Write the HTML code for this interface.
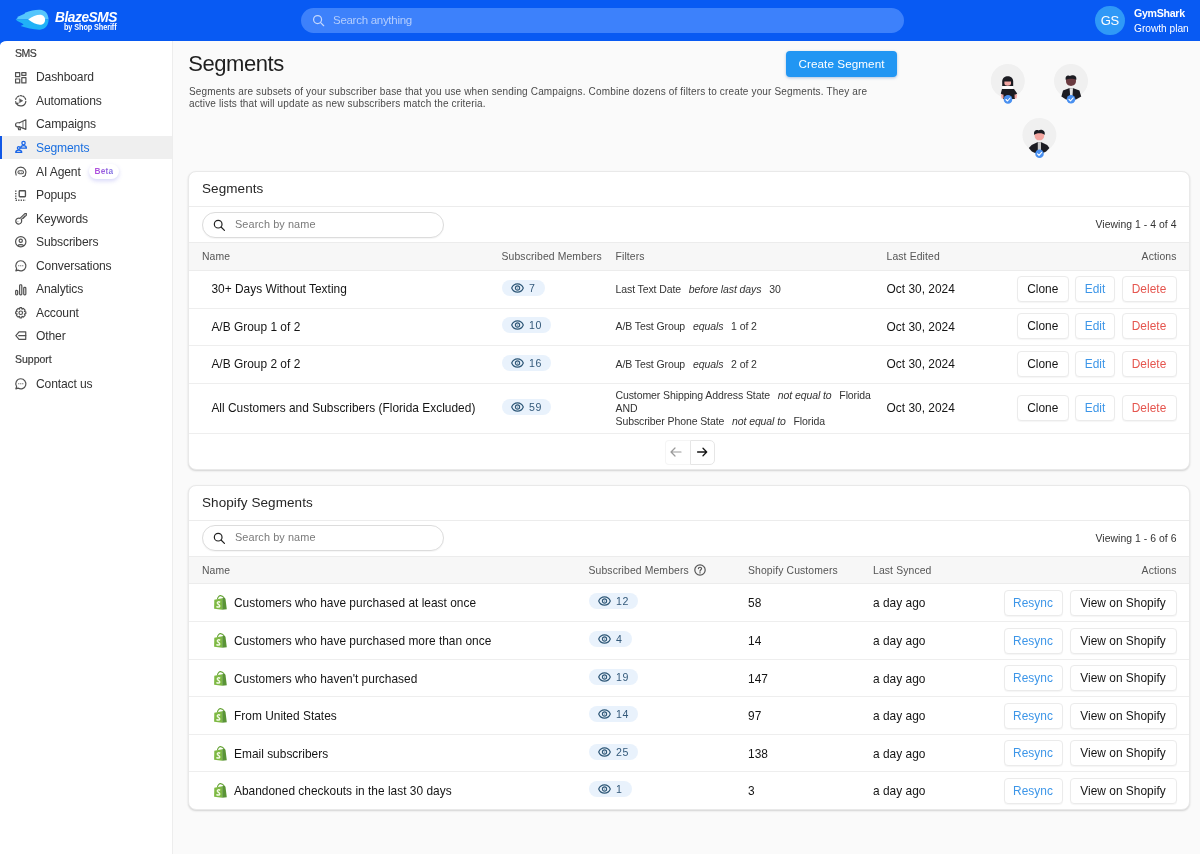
<!DOCTYPE html>
<html lang="en">
<head>
<meta charset="utf-8">
<title>Segments - BlazeSMS</title>
<style>
*{box-sizing:border-box;margin:0;padding:0}
html,body{width:1200px;height:854px;overflow:hidden}
body{font-family:"Liberation Sans",sans-serif;background:#085af3;color:#222;position:relative;font-size:13px}
.abs{position:absolute}
/* header */
#hdr{will-change:transform;position:absolute;left:0;top:0;width:1200px;height:41px;background:#085af3}
#logo-ic{position:absolute;left:0;top:0}
#logo-t1{position:absolute;left:55px;top:8px;font-size:15.5px;font-weight:bold;font-style:italic;color:#fff;letter-spacing:-0.5px;line-height:18px;transform:scaleX(0.885);transform-origin:0 0}
#logo-t2{position:absolute;left:64px;top:23.2px;font-size:8.2px;font-weight:bold;color:#fff;line-height:10px;letter-spacing:-0.1px;transform:scaleX(0.89);transform-origin:0 0;white-space:nowrap}
#gsearch{position:absolute;left:300.5px;top:7.7px;width:603.5px;height:25.5px;border-radius:13px;background:#3d81fb;color:#b3cdfd;font-size:11.5px;letter-spacing:-0.28px;line-height:25.5px;padding-left:32.5px}
#gsearch svg{position:absolute;left:11px;top:6.5px;width:13px;height:13px}
#avatar{position:absolute;left:1095px;top:5.5px;width:29.5px;height:29.5px;border-radius:50%;background:#2f99f7;color:#fff;font-size:13px;line-height:29.5px;text-align:center;letter-spacing:-0.3px}
#uname{position:absolute;left:1134px;top:6.2px;font-size:11px;font-weight:bold;color:#fff;line-height:14px;letter-spacing:-0.3px;transform:scaleX(0.965);transform-origin:0 0}
#uplan{position:absolute;left:1134px;top:21.8px;font-size:10.2px;color:#fff;line-height:13px;letter-spacing:-0.02px}
/* sidebar */
#side{will-change:transform;position:absolute;left:0;top:41px;width:173px;height:813px;background:#fff;border-top-left-radius:7px 4.5px;border-right:1px solid #ededed;box-shadow:1px 0 2px rgba(0,0,0,.035)}
.slabel{position:absolute;left:15px;font-size:10.5px;color:#3c3c3c;line-height:12px;letter-spacing:-0.3px;-webkit-text-stroke:0.2px #3c3c3c}
.sitem{position:absolute;left:0;width:172px;height:23px;font-size:12.1px;color:#333;line-height:24px;padding-left:36px;letter-spacing:-0.14px}
.sitem svg{position:absolute;left:15.2px;top:6.3px;width:11.5px;height:11.5px;stroke:#505050;fill:none;stroke-width:1.25;stroke-linecap:round;stroke-linejoin:round;overflow:visible}
.sitem.active{background:#efefef;color:#1a6fe0;border-left:2px solid #1158e6;padding-left:34px}
.sitem.active svg{left:12.9px;top:5.2px;stroke:#1a66e8;stroke-width:1.35}
#beta{position:absolute;left:89px;top:4.5px;height:15px;width:30px;border-radius:8px;background:#fff;box-shadow:0 2px 4px rgba(110,110,235,.28);font-size:8.3px;font-weight:bold;line-height:15px;text-align:center;letter-spacing:0.25px}
#beta b{background:linear-gradient(90deg,#b44ddd,#7b6fe2);-webkit-background-clip:text;background-clip:text;color:transparent;font-weight:bold}
/* main */
#main{will-change:transform;position:absolute;left:173px;top:41px;width:1027px;height:813px;background:#fafafa}

/* page head */
#ptitle{position:absolute;left:15.3px;top:9.4px;font-size:22px;color:#1f1f1f;line-height:28px;letter-spacing:-0.45px}
#pdesc{position:absolute;left:16px;top:45.1px;width:720px;font-size:10px;color:#4a4a4a;line-height:12px;letter-spacing:0.155px;white-space:nowrap}
#create{position:absolute;left:613px;top:10px;width:111px;height:26px;border-radius:4px;background:#2196f3;color:#fff;font-size:11.7px;letter-spacing:0.07px;line-height:26px;text-align:center;box-shadow:0 1px 3px rgba(20,90,180,.35)}
/* cards */
.card{position:absolute;left:15px;width:1002px;background:#fff;border:1px solid #e9e9e9;border-radius:8px;box-shadow:0 1px 2px rgba(0,0,0,.16)}
.ctitle{position:absolute;left:13px;top:8px;font-size:13.5px;color:#262626;line-height:18px;letter-spacing:0.08px}
.hline{position:absolute;left:0;width:1000px;height:1px;background:#ececec}
.sbox{position:absolute;left:13px;width:242px;height:26px;border:1px solid #dcdcdc;border-radius:13px;background:#fff;font-size:10.9px;letter-spacing:0.09px;color:#7a7a7a;line-height:23px;padding-left:32px;box-shadow:0 1px 1px rgba(0,0,0,.04)}
.sbox svg{position:absolute;left:9.5px;top:6px;width:12.5px;height:12.5px}
.viewing{position:absolute;right:12.5px;font-size:10.4px;color:#333;line-height:13px;letter-spacing:0.05px}
.thead{position:absolute;left:0;width:1000px;height:28px;background:#f7f7f7;border-top:1px solid #ececec;border-bottom:1px solid #ececec;font-size:10.4px;color:#555;letter-spacing:0.12px}
.thead span{position:absolute;top:0;line-height:27px;white-space:nowrap}
.row{position:absolute;left:0;width:1000px;border-bottom:1px solid #eeeeee;font-size:11.9px;color:#151515;letter-spacing:0.02px}
.row > span,.row > div{position:absolute;white-space:nowrap}
.badge{height:16px;border-radius:8px;background:#e9f2fc;color:#33597a;font-size:10.6px;line-height:16px;padding-left:27.5px;padding-right:9.5px;letter-spacing:0.55px}
.badge svg{position:absolute;left:9.3px;top:3px}
.btn{height:26px;border:1px solid #ebebeb;border-radius:4px;background:#fff;font-size:11.9px;letter-spacing:0.03px;line-height:24.5px;text-align:center;color:#151515;box-shadow:0 1px 1px rgba(0,0,0,.04)}
.btn.blue{color:#3d96e8}
.btn.red{color:#e5564f}
.flt{font-size:10.5px;color:#333;line-height:13px;letter-spacing:-0.1px}
.flt i{color:#333;margin:0 5px 0 5px}
</style>
</head>
<body>
<div id="hdr">
  <svg id="logo-ic" width="60" height="41" viewBox="0 0 60 41">
    <path d="M15.7 19.6 L17.8 17.7 L17.2 17 L24.6 13.7 L25 12.7 C30 10.6 36 9.6 40 9.8 C45.5 10 48.6 14.5 48.6 19.6 Z" fill="#56c6fc"/>
    <path d="M15.7 19.6 L48.6 19.6 C48.6 25 45.5 29.5 40 29.7 C34 29.9 26 28 20.6 26.1 L23.6 24.5 L22.4 23.6 L17.4 21 Z" fill="#20b2f7"/>
    <path d="M28.2 19.6 C32 16.6 36.5 14.7 40 14.7 C43 14.7 45.1 17 45.1 19.7 C45.1 22.6 43 24.8 40 24.8 C36.5 24.8 32 22.6 28.2 19.6 Z" fill="#fff"/>
  </svg>
  <div id="logo-t1">BlazeSMS</div>
  <div id="logo-t2">by Shop Sheriff</div>
  <div id="gsearch">
    <svg width="14" height="14" viewBox="0 0 14 14" fill="none" stroke="#c5d8fd" stroke-width="1.3" stroke-linecap="round"><circle cx="6" cy="6" r="4.3"/><path d="M9.3 9.3 L12.6 12.6"/></svg>
    Search anything
  </div>
  <div id="avatar">GS</div>
  <div id="uname">GymShark</div>
  <div id="uplan">Growth plan</div>
</div>

<div id="side">
  <div class="slabel" style="top:6px;letter-spacing:-0.5px">SMS</div>
  <div class="sitem" style="top:24.3px"><svg viewBox="0 0 12 12"><rect x="0.6" y="0.6" width="4.3" height="4.3"/><rect x="7.1" y="0.6" width="4.3" height="2.9"/><rect x="0.6" y="7.3" width="4.3" height="4.1"/><rect x="7.1" y="5.9" width="4.3" height="5.5"/></svg>Dashboard</div>
  <div class="sitem" style="top:47.85px"><svg viewBox="0 0 12 12"><path d="M0.9 4.6 A5.3 5.3 0 0 1 11.1 4.6" stroke-dasharray="1.7 1.3"/><path d="M11.3 6.6 A5.3 5.3 0 0 1 1.4 8.7"/><path d="M0.7 6.9 L1.2 9.1 L3.3 8.5"/><path d="M4.9 4.1 L8.1 6 L4.9 7.9 Z" fill="#555" stroke-width="0.6"/></svg>Automations</div>
  <div class="sitem" style="top:71.4px"><svg viewBox="0 0 12 12"><path d="M4.6 3.9 L11.3 0.8 V10.8 L4.6 8.1"/><path d="M4.6 3.9 H2.7 A2.1 2.1 0 0 0 2.7 8.1 H4.6"/><path d="M3.1 8.2 L3.9 11.2 H5.7 L5.1 8.4"/><path d="M8.3 2.4 V9.4" stroke-width="0.8"/></svg>Campaigns</div>
  <div class="sitem active" style="top:95px"><svg viewBox="0 0 12 12"><circle cx="8.9" cy="2.2" r="1.75"/><path d="M5.9 7.5 C5.9 5.4 7.2 4.9 8.9 4.9 C10.6 4.9 11.9 5.4 11.9 7.5 Z"/><circle cx="3.9" cy="7.3" r="1.4"/><path d="M0.8 11.9 C0.8 10 2 9.6 3.9 9.6 C5.8 9.6 7 10 7 11.9 Z"/></svg>Segments</div>
  <div class="sitem" style="top:118.5px"><svg viewBox="0 0 12 12"><path d="M1.2 9.4 A5.5 5.5 0 1 1 10.8 9.4"/><rect x="3.1" y="4.9" width="5.8" height="3.1" rx="1.55" stroke-width="1.05"/><circle cx="4.9" cy="6.45" r="0.5" fill="#505050" stroke="none"/><circle cx="7.1" cy="6.45" r="0.5" fill="#505050" stroke="none"/><path d="M10.8 9.4 C10.4 10.5 9.4 11 8 11" stroke-width="1.05"/></svg>AI Agent<span id="beta"><b>Beta</b></span></div>
  <div class="sitem" style="top:142.05px"><svg viewBox="0 0 12 12"><g transform="translate(-0.5,1)"><rect x="4.9" y="0.8" width="6.5" height="6.3" rx="0.7" stroke-width="1.4"/><path d="M1.3 0.6 v10.4 M1.3 10.8 h10.4" stroke-dasharray="1.3 1.25" stroke-linecap="butt" stroke-width="1.5"/></g></svg>Popups</div>
  <div class="sitem" style="top:165.6px"><svg viewBox="0 0 12 12"><path d="M5.2 5.6 L10.3 0.7 L11.9 0.6 L11.8 2.4 L10.9 3.3 L10 3.2 L10 4.3 L9 4.3 L8.9 5.4 L7.9 5.4 L6.6 6.9 A3.1 3.1 0 1 1 5.2 5.6 Z"/><circle cx="3.1" cy="8.9" r="0.5" fill="#505050" stroke="none"/></svg>Keywords</div>
  <div class="sitem" style="top:189.15px"><svg viewBox="0 0 12 12"><circle cx="6" cy="6" r="5.4"/><circle cx="6" cy="4.9" r="1.7"/><path d="M2.9 10.1 C3.8 8.5 8.2 8.5 9.1 10.1"/></svg>Subscribers</div>
  <div class="sitem" style="top:212.7px"><svg viewBox="0 0 12 12"><path d="M6 0.8 A5.3 5.3 0 1 1 3.1 10.5 L0.9 11.3 L1.7 9.1 A5.3 5.3 0 0 1 6 0.8 Z"/><path d="M3.7 6 h0.4 M5.8 6 h0.4 M7.9 6 h0.4" stroke-width="0.9"/></svg>Conversations</div>
  <div class="sitem" style="top:236.25px"><svg viewBox="0 0 12 12"><rect x="0.7" y="6.6" width="2.1" height="4.8" rx="0.9"/><rect x="4.8" y="0.8" width="2.3" height="10.6" rx="0.9"/><rect x="9.1" y="3.5" width="2.2" height="7.9" rx="0.9"/></svg>Analytics</div>
  <div class="sitem" style="top:259.8px"><svg viewBox="0 0 12 12"><circle cx="6" cy="6" r="1.85"/><path d="M5.1 0.7 H6.9 L7.3 2.2 L8.7 1.5 L10.5 3.3 L9.8 4.7 L11.3 5.1 V6.9 L9.8 7.3 L10.5 8.7 L8.7 10.5 L7.3 9.8 L6.9 11.3 H5.1 L4.7 9.8 L3.3 10.5 L1.5 8.7 L2.2 7.3 L0.7 6.9 V5.1 L2.2 4.7 L1.5 3.3 L3.3 1.5 L4.7 2.2 Z"/></svg>Account</div>
  <div class="sitem" style="top:283.35px"><svg viewBox="0 0 12 12"><g transform="translate(0,-1.2)"><path d="M4.2 2.1 H11.2 V9.9 H4.2 L0.9 6 Z"/><path d="M3.8 6 H11.2"/></g></svg>Other</div>
  <div class="slabel" style="top:312px;letter-spacing:0">Support</div>
  <div class="sitem" style="top:330.5px"><svg viewBox="0 0 12 12"><path d="M6 0.8 A5.3 5.3 0 1 1 3.1 10.5 L0.9 11.3 L1.7 9.1 A5.3 5.3 0 0 1 6 0.8 Z"/><path d="M3.7 6 h0.4 M5.8 6 h0.4 M7.9 6 h0.4" stroke-width="0.9"/></svg>Contact us</div>
</div>

<div id="main">

<div id="ptitle">Segments</div>
<div id="pdesc">Segments are subsets of your subscriber base that you use when sending Campaigns. Combine dozens of filters to create your Segments. They are<br>active lists that will update as new subscribers match the criteria.</div>
<div id="create">Create Segment</div>
<svg class="abs" style="left:787px;top:9px" width="160" height="120" viewBox="0 0 160 120">
  <defs><filter id="bl" x="-20%" y="-20%" width="140%" height="140%"><feGaussianBlur stdDeviation="0.35"/></filter></defs>
  <g filter="url(#bl)">
  <circle cx="47.8" cy="31" r="17" fill="#f0f0f0"/>
  <circle cx="111" cy="31" r="17" fill="#f0f0f0"/>
  <circle cx="79.4" cy="85" r="17" fill="#f0f0f0"/>
  <!-- woman -->
  <path d="M42.2 36 V31.5 C42.2 24.5 53.2 24.5 53.2 31.5 V36 Z" fill="#1d1d24"/>
  <path d="M44.4 31.6 H51 V33.5 C51 36.4 44.4 36.4 44.4 33.5 Z" fill="#f2a7a3"/>
  <rect x="42.6" y="36.2" width="10.4" height="2.4" fill="#fff"/>
  <path d="M40.8 43.5 L42 39 H54 L57.2 43.5 L55 45.5 V49 H43 V45.5 Z" fill="#1d1d24"/>
  <path d="M41 44.6 L43.4 44.6 L43.6 48.4 L41.6 48.4 Z M54.6 44.6 L57 44.6 L56.6 48.4 L54.6 48.4 Z" fill="#f2a7a3"/>
  <circle cx="48" cy="49.4" r="4.3" fill="#4a90f0"/>
  <path d="M46 49.5 L47.5 51 L50.2 48" fill="none" stroke="#fff" stroke-width="1.1" stroke-linecap="round" stroke-linejoin="round"/>
  <!-- man dark -->
  <path d="M106 31 C105.5 24.5 116.5 24.5 116 31 C116 37.5 106 37.5 106 31 Z" fill="#6b3b3f"/>
  <path d="M105.8 30 C104.6 25 109 25.2 110 26 C111.5 24.6 117.6 25 116.2 30 C114.4 28.4 107.6 28.4 105.8 30 Z" fill="#1d1d24"/>
  <path d="M101.4 46.4 L103 40.4 L109 38.2 H113.4 L119.4 40.4 L121.2 46.4 L116 49.4 H106 Z" fill="#1d1d24"/>
  <path d="M109.6 38.2 H113 L112.4 47 H110.2 Z" fill="#e6e6e6"/>
  <circle cx="111" cy="49.2" r="4.3" fill="#4a90f0"/>
  <path d="M109 49.3 L110.5 50.8 L113.2 47.8" fill="none" stroke="#fff" stroke-width="1.1" stroke-linecap="round" stroke-linejoin="round"/>
  <!-- man light -->
  <path d="M74.6 85.4 C74.2 79 84.6 79 84.2 85.4 C84.2 92 74.6 92 74.6 85.4 Z" fill="#f4a6a0"/>
  <path d="M74.2 85 C73 79.6 77.6 79.6 78.6 80.4 C80 79 86 79.4 84.6 85 C83.4 82.6 75.6 82.8 74.2 85 Z" fill="#1d1d24"/>
  <path d="M68.8 98 L71.6 95 L77.4 92.2 H81.4 L87.2 95 L89.4 98 L86.2 101.4 L83 103 H75 L71.8 101.4 Z" fill="#1d1d24"/>
  <path d="M77.8 92.2 H81 L81 102 H77.8 Z" fill="#c9c9c9"/>
  <circle cx="79.5" cy="103.7" r="4.3" fill="#4a90f0"/>
  <path d="M77.5 103.8 L79 105.3 L81.7 102.3" fill="none" stroke="#fff" stroke-width="1.1" stroke-linecap="round" stroke-linejoin="round"/>
  </g>
</svg>
<div class="card" style="top:130px;height:299px">
  <div class="ctitle" style="top:7.5px">Segments</div>
  <div class="hline" style="top:34px"></div>
  <div class="sbox" style="top:40px"><svg width="13" height="13" viewBox="0 0 14 14" fill="none" stroke="#222" stroke-width="1.35" stroke-linecap="round"><circle cx="5.8" cy="5.8" r="4.3"/><path d="M9 9 L12.8 12.8"/></svg>Search by name</div>
  <div class="viewing" style="top:46px">Viewing 1 - 4 of 4</div>
  <div class="thead" style="top:70px;height:29px"><span style="left:13px">Name</span><span style="left:312.5px">Subscribed Members</span><span style="left:426.5px">Filters</span><span style="left:697.5px">Last Edited</span><span style="right:12.5px">Actions</span></div>
  <div class="row" style="top:99px;height:38px">
  <span style="left:22.400000000000006px;top:10.3px;line-height:16px">30+ Days Without Texting</span>
  <div class="badge" style="left:312.5px;top:8.9px"><svg width="13" height="10" viewBox="0 0 13 10" fill="none" stroke="#2f5878" stroke-width="1.2" stroke-linejoin="round"><path d="M0.7 5 C2.9 -0.5 10.1 -0.5 12.3 5 C10.1 10.5 2.9 10.5 0.7 5 Z"/><circle cx="6.5" cy="5" r="2.1"/><circle cx="6.5" cy="5" r="0.5" fill="#2f5878" stroke="none"/></svg>7</div>
  <div class="flt" style="left:426.5px;top:11.7px">Last Text Date <i>before last days</i> 30</div>
  <span style="left:697.5px;top:10.3px;line-height:16px">Oct 30, 2024</span>
  <div class="btn" style="left:828px;top:4.699999999999999px;width:51.5px">Clone</div>
  <div class="btn blue" style="left:886.3px;top:4.699999999999999px;width:39.5px">Edit</div>
  <div class="btn red" style="left:932.5px;top:4.699999999999999px;width:55px">Delete</div>
</div>
<div class="row" style="top:137px;height:37px">
  <span style="left:22.400000000000006px;top:9.8px;line-height:16px">A/B Group 1 of 2</span>
  <div class="badge" style="left:312.5px;top:8.4px"><svg width="13" height="10" viewBox="0 0 13 10" fill="none" stroke="#2f5878" stroke-width="1.2" stroke-linejoin="round"><path d="M0.7 5 C2.9 -0.5 10.1 -0.5 12.3 5 C10.1 10.5 2.9 10.5 0.7 5 Z"/><circle cx="6.5" cy="5" r="2.1"/><circle cx="6.5" cy="5" r="0.5" fill="#2f5878" stroke="none"/></svg>10</div>
  <div class="flt" style="left:426.5px;top:11.2px">A/B Test Group <i>equals</i> 1 of 2</div>
  <span style="left:697.5px;top:9.8px;line-height:16px">Oct 30, 2024</span>
  <div class="btn" style="left:828px;top:4.199999999999999px;width:51.5px">Clone</div>
  <div class="btn blue" style="left:886.3px;top:4.199999999999999px;width:39.5px">Edit</div>
  <div class="btn red" style="left:932.5px;top:4.199999999999999px;width:55px">Delete</div>
</div>
<div class="row" style="top:174px;height:38px">
  <span style="left:22.400000000000006px;top:10.3px;line-height:16px">A/B Group 2 of 2</span>
  <div class="badge" style="left:312.5px;top:8.9px"><svg width="13" height="10" viewBox="0 0 13 10" fill="none" stroke="#2f5878" stroke-width="1.2" stroke-linejoin="round"><path d="M0.7 5 C2.9 -0.5 10.1 -0.5 12.3 5 C10.1 10.5 2.9 10.5 0.7 5 Z"/><circle cx="6.5" cy="5" r="2.1"/><circle cx="6.5" cy="5" r="0.5" fill="#2f5878" stroke="none"/></svg>16</div>
  <div class="flt" style="left:426.5px;top:11.7px">A/B Test Group <i>equals</i> 2 of 2</div>
  <span style="left:697.5px;top:10.3px;line-height:16px">Oct 30, 2024</span>
  <div class="btn" style="left:828px;top:4.699999999999999px;width:51.5px">Clone</div>
  <div class="btn blue" style="left:886.3px;top:4.699999999999999px;width:39.5px">Edit</div>
  <div class="btn red" style="left:932.5px;top:4.699999999999999px;width:55px">Delete</div>
</div>
<div class="row" style="top:212px;height:50px">
  <span style="left:22.400000000000006px;top:16.3px;line-height:16px">All Customers and Subscribers (Florida Excluded)</span>
  <div class="badge" style="left:312.5px;top:14.9px"><svg width="13" height="10" viewBox="0 0 13 10" fill="none" stroke="#2f5878" stroke-width="1.2" stroke-linejoin="round"><path d="M0.7 5 C2.9 -0.5 10.1 -0.5 12.3 5 C10.1 10.5 2.9 10.5 0.7 5 Z"/><circle cx="6.5" cy="5" r="2.1"/><circle cx="6.5" cy="5" r="0.5" fill="#2f5878" stroke="none"/></svg>59</div>
  <div class="flt" style="left:426.5px;top:5.199999999999999px">Customer Shipping Address State <i>not equal to</i> Florida<br>AND<br>Subscriber Phone State <i>not equal to</i> Florida</div>
  <span style="left:697.5px;top:16.3px;line-height:16px">Oct 30, 2024</span>
  <div class="btn" style="left:828px;top:10.7px;width:51.5px">Clone</div>
  <div class="btn blue" style="left:886.3px;top:10.7px;width:39.5px">Edit</div>
  <div class="btn red" style="left:932.5px;top:10.7px;width:55px">Delete</div>
</div>
  <div class="abs" style="left:475.5px;top:267.5px;width:25.5px;height:25px;border:1px solid #f5f5f5;border-right:none;border-radius:4px 0 0 4px;background:#fff"></div>
  <div class="abs" style="left:500.5px;top:267.5px;width:25px;height:25px;border:1px solid #e6e6e6;border-radius:0 5px 5px 0;background:#fff"></div>
  <svg class="abs" style="left:481.20000000000005px;top:274.5px" width="12" height="10" viewBox="0 0 12 10" fill="none" stroke="#9a9a9a" stroke-width="1.2" stroke-linecap="round" stroke-linejoin="round"><path d="M11 5 H1.2 M5 1 L1 5 L5 9"/></svg>
  <svg class="abs" style="left:507.4px;top:274.5px" width="12" height="10" viewBox="0 0 12 10" fill="none" stroke="#151515" stroke-width="1.3" stroke-linecap="round" stroke-linejoin="round"><path d="M1.6 5 H10.6 M7 1.3 L10.7 5 L7 8.7"/></svg>
</div>
<div class="card" style="top:444px;height:325px;overflow:hidden">
  <div class="ctitle" style="top:7.5px">Shopify Segments</div>
  <div class="hline" style="top:34px"></div>
  <div class="sbox" style="top:39px"><svg width="13" height="13" viewBox="0 0 14 14" fill="none" stroke="#222" stroke-width="1.35" stroke-linecap="round"><circle cx="5.8" cy="5.8" r="4.3"/><path d="M9 9 L12.8 12.8"/></svg>Search by name</div>
  <div class="viewing" style="top:45.5px">Viewing 1 - 6 of 6</div>
  <div class="thead" style="top:70px"><span style="left:13px">Name</span><span style="left:399.5px">Subscribed Members</span>
    <svg class="abs" style="left:504.9px;top:7.4px" width="12" height="12" viewBox="0 0 12 12" fill="none" stroke="#555" stroke-width="1.2"><circle cx="6" cy="6" r="5.2"/><path d="M4.4 4.6 C4.4 2.8 7.6 2.8 7.6 4.6 C7.6 5.8 6 5.8 6 7.2 M6 8.6 v0.4" stroke-linecap="round"/></svg>
    <span style="left:559px">Shopify Customers</span><span style="left:684px">Last Synced</span><span style="right:12.5px">Actions</span></div>
  <div class="row" style="top:98px;height:38px">
  <div style="left:25px;top:11.1px"><svg class="shop" width="13" height="15" viewBox="0 0 13 15"><path d="M3.4 4.6 C3.5 1.8 5.4 0.5 6.6 0.6 C8.4 0.8 9.7 2 10.1 3.2" stroke="#6aa63c" fill="none" stroke-width="1.1"/><path d="M0.3 4.8 L8.2 3.2 L8.2 14.7 L0.1 13.8 Z" fill="#7eb944"/><path d="M8.2 3.2 L10.8 2.8 L11.5 4 L12.8 14.2 L8.2 14.7 Z" fill="#5a9436"/><path d="M6.1 7.3 C4.7 6.2 3 7 3.4 8.3 C3.8 9.5 5.9 9.5 5.7 11.1 C5.5 12.5 3.5 12.3 2.5 11.4" fill="none" stroke="#f3fbe6" stroke-width="1.5"/></svg></div>
  <span style="left:45px;top:11.3px;line-height:16px">Customers who have purchased at least once</span>
  <div class="badge" style="left:399.5px;top:9.2px"><svg width="13" height="10" viewBox="0 0 13 10" fill="none" stroke="#2f5878" stroke-width="1.2" stroke-linejoin="round"><path d="M0.7 5 C2.9 -0.5 10.1 -0.5 12.3 5 C10.1 10.5 2.9 10.5 0.7 5 Z"/><circle cx="6.5" cy="5" r="2.1"/><circle cx="6.5" cy="5" r="0.5" fill="#2f5878" stroke="none"/></svg>12</div>
  <span style="left:559px;top:11.3px;line-height:16px">58</span>
  <span style="left:684px;top:11.3px;line-height:16px">a day ago</span>
  <div class="btn blue" style="left:814.5px;top:5.5px;width:59px">Resync</div>
  <div class="btn" style="left:880.5px;top:5.5px;width:107px">View on Shopify</div>
</div>
<div class="row" style="top:136px;height:38px">
  <div style="left:25px;top:11.1px"><svg class="shop" width="13" height="15" viewBox="0 0 13 15"><path d="M3.4 4.6 C3.5 1.8 5.4 0.5 6.6 0.6 C8.4 0.8 9.7 2 10.1 3.2" stroke="#6aa63c" fill="none" stroke-width="1.1"/><path d="M0.3 4.8 L8.2 3.2 L8.2 14.7 L0.1 13.8 Z" fill="#7eb944"/><path d="M8.2 3.2 L10.8 2.8 L11.5 4 L12.8 14.2 L8.2 14.7 Z" fill="#5a9436"/><path d="M6.1 7.3 C4.7 6.2 3 7 3.4 8.3 C3.8 9.5 5.9 9.5 5.7 11.1 C5.5 12.5 3.5 12.3 2.5 11.4" fill="none" stroke="#f3fbe6" stroke-width="1.5"/></svg></div>
  <span style="left:45px;top:11.3px;line-height:16px">Customers who have purchased more than once</span>
  <div class="badge" style="left:399.5px;top:9.2px"><svg width="13" height="10" viewBox="0 0 13 10" fill="none" stroke="#2f5878" stroke-width="1.2" stroke-linejoin="round"><path d="M0.7 5 C2.9 -0.5 10.1 -0.5 12.3 5 C10.1 10.5 2.9 10.5 0.7 5 Z"/><circle cx="6.5" cy="5" r="2.1"/><circle cx="6.5" cy="5" r="0.5" fill="#2f5878" stroke="none"/></svg>4</div>
  <span style="left:559px;top:11.3px;line-height:16px">14</span>
  <span style="left:684px;top:11.3px;line-height:16px">a day ago</span>
  <div class="btn blue" style="left:814.5px;top:5.5px;width:59px">Resync</div>
  <div class="btn" style="left:880.5px;top:5.5px;width:107px">View on Shopify</div>
</div>
<div class="row" style="top:174px;height:37px">
  <div style="left:25px;top:10.6px"><svg class="shop" width="13" height="15" viewBox="0 0 13 15"><path d="M3.4 4.6 C3.5 1.8 5.4 0.5 6.6 0.6 C8.4 0.8 9.7 2 10.1 3.2" stroke="#6aa63c" fill="none" stroke-width="1.1"/><path d="M0.3 4.8 L8.2 3.2 L8.2 14.7 L0.1 13.8 Z" fill="#7eb944"/><path d="M8.2 3.2 L10.8 2.8 L11.5 4 L12.8 14.2 L8.2 14.7 Z" fill="#5a9436"/><path d="M6.1 7.3 C4.7 6.2 3 7 3.4 8.3 C3.8 9.5 5.9 9.5 5.7 11.1 C5.5 12.5 3.5 12.3 2.5 11.4" fill="none" stroke="#f3fbe6" stroke-width="1.5"/></svg></div>
  <span style="left:45px;top:10.8px;line-height:16px">Customers who haven't purchased</span>
  <div class="badge" style="left:399.5px;top:8.7px"><svg width="13" height="10" viewBox="0 0 13 10" fill="none" stroke="#2f5878" stroke-width="1.2" stroke-linejoin="round"><path d="M0.7 5 C2.9 -0.5 10.1 -0.5 12.3 5 C10.1 10.5 2.9 10.5 0.7 5 Z"/><circle cx="6.5" cy="5" r="2.1"/><circle cx="6.5" cy="5" r="0.5" fill="#2f5878" stroke="none"/></svg>19</div>
  <span style="left:559px;top:10.8px;line-height:16px">147</span>
  <span style="left:684px;top:10.8px;line-height:16px">a day ago</span>
  <div class="btn blue" style="left:814.5px;top:5.0px;width:59px">Resync</div>
  <div class="btn" style="left:880.5px;top:5.0px;width:107px">View on Shopify</div>
</div>
<div class="row" style="top:211px;height:38px">
  <div style="left:25px;top:11.1px"><svg class="shop" width="13" height="15" viewBox="0 0 13 15"><path d="M3.4 4.6 C3.5 1.8 5.4 0.5 6.6 0.6 C8.4 0.8 9.7 2 10.1 3.2" stroke="#6aa63c" fill="none" stroke-width="1.1"/><path d="M0.3 4.8 L8.2 3.2 L8.2 14.7 L0.1 13.8 Z" fill="#7eb944"/><path d="M8.2 3.2 L10.8 2.8 L11.5 4 L12.8 14.2 L8.2 14.7 Z" fill="#5a9436"/><path d="M6.1 7.3 C4.7 6.2 3 7 3.4 8.3 C3.8 9.5 5.9 9.5 5.7 11.1 C5.5 12.5 3.5 12.3 2.5 11.4" fill="none" stroke="#f3fbe6" stroke-width="1.5"/></svg></div>
  <span style="left:45px;top:11.3px;line-height:16px">From United States</span>
  <div class="badge" style="left:399.5px;top:9.2px"><svg width="13" height="10" viewBox="0 0 13 10" fill="none" stroke="#2f5878" stroke-width="1.2" stroke-linejoin="round"><path d="M0.7 5 C2.9 -0.5 10.1 -0.5 12.3 5 C10.1 10.5 2.9 10.5 0.7 5 Z"/><circle cx="6.5" cy="5" r="2.1"/><circle cx="6.5" cy="5" r="0.5" fill="#2f5878" stroke="none"/></svg>14</div>
  <span style="left:559px;top:11.3px;line-height:16px">97</span>
  <span style="left:684px;top:11.3px;line-height:16px">a day ago</span>
  <div class="btn blue" style="left:814.5px;top:5.5px;width:59px">Resync</div>
  <div class="btn" style="left:880.5px;top:5.5px;width:107px">View on Shopify</div>
</div>
<div class="row" style="top:249px;height:37px">
  <div style="left:25px;top:10.6px"><svg class="shop" width="13" height="15" viewBox="0 0 13 15"><path d="M3.4 4.6 C3.5 1.8 5.4 0.5 6.6 0.6 C8.4 0.8 9.7 2 10.1 3.2" stroke="#6aa63c" fill="none" stroke-width="1.1"/><path d="M0.3 4.8 L8.2 3.2 L8.2 14.7 L0.1 13.8 Z" fill="#7eb944"/><path d="M8.2 3.2 L10.8 2.8 L11.5 4 L12.8 14.2 L8.2 14.7 Z" fill="#5a9436"/><path d="M6.1 7.3 C4.7 6.2 3 7 3.4 8.3 C3.8 9.5 5.9 9.5 5.7 11.1 C5.5 12.5 3.5 12.3 2.5 11.4" fill="none" stroke="#f3fbe6" stroke-width="1.5"/></svg></div>
  <span style="left:45px;top:10.8px;line-height:16px">Email subscribers</span>
  <div class="badge" style="left:399.5px;top:8.7px"><svg width="13" height="10" viewBox="0 0 13 10" fill="none" stroke="#2f5878" stroke-width="1.2" stroke-linejoin="round"><path d="M0.7 5 C2.9 -0.5 10.1 -0.5 12.3 5 C10.1 10.5 2.9 10.5 0.7 5 Z"/><circle cx="6.5" cy="5" r="2.1"/><circle cx="6.5" cy="5" r="0.5" fill="#2f5878" stroke="none"/></svg>25</div>
  <span style="left:559px;top:10.8px;line-height:16px">138</span>
  <span style="left:684px;top:10.8px;line-height:16px">a day ago</span>
  <div class="btn blue" style="left:814.5px;top:5.0px;width:59px">Resync</div>
  <div class="btn" style="left:880.5px;top:5.0px;width:107px">View on Shopify</div>
</div>
<div class="row" style="top:286px;height:38px">
  <div style="left:25px;top:11.1px"><svg class="shop" width="13" height="15" viewBox="0 0 13 15"><path d="M3.4 4.6 C3.5 1.8 5.4 0.5 6.6 0.6 C8.4 0.8 9.7 2 10.1 3.2" stroke="#6aa63c" fill="none" stroke-width="1.1"/><path d="M0.3 4.8 L8.2 3.2 L8.2 14.7 L0.1 13.8 Z" fill="#7eb944"/><path d="M8.2 3.2 L10.8 2.8 L11.5 4 L12.8 14.2 L8.2 14.7 Z" fill="#5a9436"/><path d="M6.1 7.3 C4.7 6.2 3 7 3.4 8.3 C3.8 9.5 5.9 9.5 5.7 11.1 C5.5 12.5 3.5 12.3 2.5 11.4" fill="none" stroke="#f3fbe6" stroke-width="1.5"/></svg></div>
  <span style="left:45px;top:11.3px;line-height:16px">Abandoned checkouts in the last 30 days</span>
  <div class="badge" style="left:399.5px;top:9.2px"><svg width="13" height="10" viewBox="0 0 13 10" fill="none" stroke="#2f5878" stroke-width="1.2" stroke-linejoin="round"><path d="M0.7 5 C2.9 -0.5 10.1 -0.5 12.3 5 C10.1 10.5 2.9 10.5 0.7 5 Z"/><circle cx="6.5" cy="5" r="2.1"/><circle cx="6.5" cy="5" r="0.5" fill="#2f5878" stroke="none"/></svg>1</div>
  <span style="left:559px;top:11.3px;line-height:16px">3</span>
  <span style="left:684px;top:11.3px;line-height:16px">a day ago</span>
  <div class="btn blue" style="left:814.5px;top:5.5px;width:59px">Resync</div>
  <div class="btn" style="left:880.5px;top:5.5px;width:107px">View on Shopify</div>
</div>
</div>
</div>
</body>
</html>
